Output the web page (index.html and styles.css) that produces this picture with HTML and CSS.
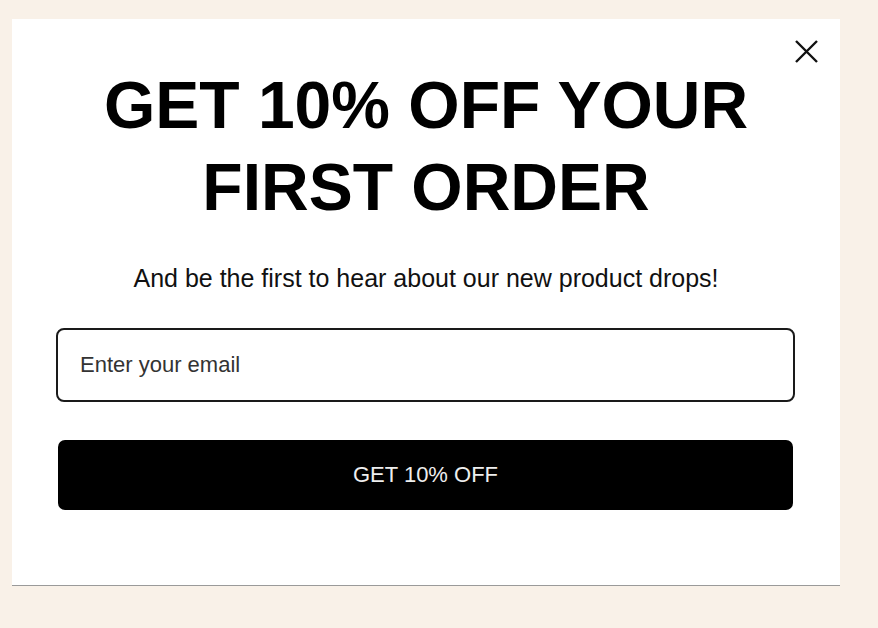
FILE: index.html
```html
<!DOCTYPE html>
<html>
<head>
<meta name="viewport" content="width=device-width, initial-scale=1.0">
<title>Get 10% off</title>
<link rel="stylesheet" href="styles.css">
</head>
<body>
	<div id="popup">
		<button class="close" aria-label="Close">
			<svg width="23" height="23" viewBox="0 0 23 23">
				<path d="M1 1 L22 22 M22 1 L1 22" stroke="#111" stroke-width="2.4" fill="none"/>
			</svg>
		</button>
		<h1>GET 10% OFF YOUR<br>FIRST ORDER</h1>
		<p class="sub">And be the first to hear about our new product drops!</p>
		<form onsubmit="return false;">
			<input type="email" class="email" placeholder="Enter your email">
			<button type="submit" class="submit">GET 10% OFF</button>
		</form>
	</div>
</body>
</html>
```

FILE: styles.css
```css
body {
	margin: 0;
	background-color: #f9f1e8;
	font-family: "Liberation Sans", Arial, sans-serif;
	color: #000;
}
#popup {
	position: relative;
	box-sizing: border-box;
	width: 828px;
	height: 567px;
	margin: 19px 0 0 12px;
	padding: 45px 44px 0 44px;
	background-color: #fff;
	border-bottom: 1px solid #9a9a9a;
	text-align: center;
}
#popup .close {
	position: absolute;
	top: 21px;
	right: 22px;
	width: 23px;
	height: 23px;
	padding: 0;
	border: none;
	background: transparent;
	cursor: pointer;
}
#popup .close svg {
	display: block;
}
#popup h1 {
	margin: 0;
	font-size: 66px;
	line-height: 82px;
	font-weight: bold;
	letter-spacing: 0;
}
#popup .sub {
	margin: 35px 0 0 0;
	font-size: 25px;
	line-height: 30px;
	color: #111;
}
#popup form {
	margin-top: 35px;
}
#popup .email {
	display: block;
	box-sizing: border-box;
	width: 739px;
	height: 74px;
	padding: 0 22px;
	border: 2px solid #1a1a1a;
	border-radius: 8px;
	font-family: inherit;
	font-size: 22px;
	color: #000;
	outline: none;
}
#popup .email::placeholder {
	color: #333;
}
#popup .submit {
	display: block;
	width: 735px;
	height: 70px;
	margin: 38px 0 0 2px;
	border: none;
	border-radius: 7px;
	background-color: #000;
	color: #eee;
	font-family: inherit;
	font-size: 22px;
	cursor: pointer;
}
```
